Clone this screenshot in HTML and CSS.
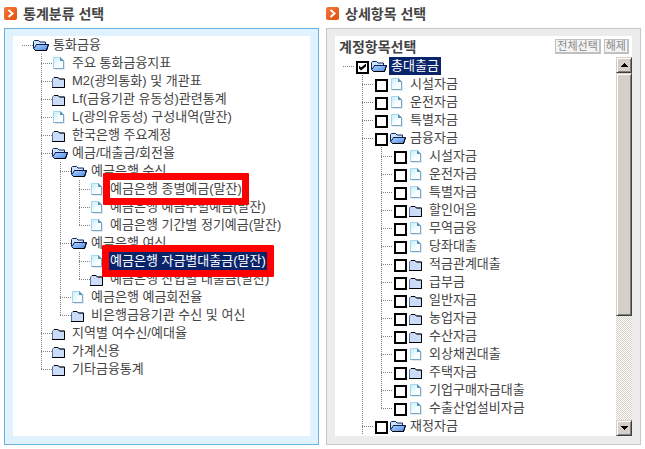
FILE: index.html
```html
<!DOCTYPE html>
<html lang="ko">
<head>
  <meta charset="UTF-8">
  <title>통계분류 선택</title>
  <meta name="viewport" content="width=device-width, initial-scale=1.0">
  <link rel="stylesheet" href="styles.css">
</head>
<body>

  <svg class="sprite" width="0" height="0" aria-hidden="true">
    <defs>
      <linearGradient id="orange" x1="0" y1="0" x2="1" y2="1">
        <stop offset="0" stop-color="#f47a3c"/>
        <stop offset="1" stop-color="#e2500c"/>
      </linearGradient>
      <linearGradient id="paper" x1="0" y1="0" x2="1" y2="1">
        <stop offset="0" stop-color="#c4ecfb"/>
        <stop offset="0.6" stop-color="#fafeff"/>
      </linearGradient>
      <linearGradient id="blue" x1="0" y1="0" x2="1" y2="1">
        <stop offset="0" stop-color="#b4d8ff"/>
        <stop offset="1" stop-color="#4c86e4"/>
      </linearGradient>
    </defs>
    <symbol id="arrow" viewBox="0 0 13 13">
      <rect width="13" height="13" rx="2" fill="url(#orange)"/>
      <path d="M4.500 3l4 3.500-4 3.500" fill="none" stroke="#fff" stroke-width="2"/>
    </symbol>
    <symbol id="open" viewBox="0 0 16 16">
      <path d="M.5 11.500V4.500l1-1h4l1.500 1.500h5.500v2" fill="#cfe2fb" stroke="#10245c"/>
      <path d="M3 7.500h12.500l-2 6H2.500l-2-2" fill="url(#blue)" stroke="#0a1c58"/>
      <path d="M1 11.500L3.500 7.500" stroke="#10245c" fill="none"/>
      <path d="M2.500 13.500h11l2-6" stroke="#000" fill="none"/>
    </symbol>
    <symbol id="closed" viewBox="0 0 16 16">
      <path d="M.5 14.500V6l1.500-1.500h4L7.500 6h5v8.500z" fill="#cbdcf8" stroke="#5c74a4"/>
      <path d="M2 4.500h4L7.500 6h5v8.500H0" fill="none" stroke="#000"/>
    </symbol>
    <symbol id="doc" viewBox="0 0 16 16">
      <path d="M1.500 2.500h7l3 3v8h-10z" fill="url(#paper)" stroke="#a4d8ec"/>
      <path d="M11.500 5.500v8h-10" fill="none" stroke="#7ba6c4"/>
      <path d="M8 2v4h4z" fill="#5c92b8"/>
      <path d="M12.500 6v8.500H3" fill="none" stroke="#dfe7f0"/>
    </symbol>
  </svg>

  <main class="page">
    <section class="column">
      <h2 class="title"><svg class="arrow"><use href="#arrow"/></svg>통계분류 선택</h2>
      <div class="panel panel-blue">
        <div class="inner">
          <ul class="tree tree-left">
            <li>
              <div class="row"><svg class="icon"><use href="#open"/></svg><span class="label">통화금융</span></div>
              <ul>
                <li><div class="row"><svg class="icon"><use href="#doc"/></svg><span class="label">주요 통화금융지표</span></div></li>
                <li><div class="row"><svg class="icon"><use href="#closed"/></svg><span class="label">M2(광의통화) 및 개관표</span></div></li>
                <li><div class="row"><svg class="icon"><use href="#closed"/></svg><span class="label">Lf(금융기관 유동성)관련통계</span></div></li>
                <li><div class="row"><svg class="icon"><use href="#doc"/></svg><span class="label">L(광의유동성) 구성내역(말잔)</span></div></li>
                <li><div class="row"><svg class="icon"><use href="#closed"/></svg><span class="label">한국은행 주요계정</span></div></li>
                <li>
                  <div class="row"><svg class="icon"><use href="#open"/></svg><span class="label">예금/대출금/회전율</span></div>
                  <ul>
                    <li>
                      <div class="row"><svg class="icon"><use href="#open"/></svg><span class="label">예금은행 수신</span></div>
                      <ul>
                        <li><div class="row"><svg class="icon"><use href="#doc"/></svg><span class="label marked">예금은행 종별예금(말잔)</span></div></li>
                        <li><div class="row"><svg class="icon"><use href="#doc"/></svg><span class="label">예금은행 예금주별예금(말잔)</span></div></li>
                        <li><div class="row"><svg class="icon"><use href="#doc"/></svg><span class="label">예금은행 기간별 정기예금(말잔)</span></div></li>
                      </ul>
                    </li>
                    <li>
                      <div class="row"><svg class="icon"><use href="#open"/></svg><span class="label">예금은행 여신</span></div>
                      <ul>
                        <li><div class="row"><svg class="icon"><use href="#doc"/></svg><span class="label selected marked">예금은행 자금별대출금(말잔)</span></div></li>
                        <li><div class="row"><svg class="icon"><use href="#closed"/></svg><span class="label">예금은행 산업별 대출금(말잔)</span></div></li>
                      </ul>
                    </li>
                    <li><div class="row"><svg class="icon"><use href="#doc"/></svg><span class="label">예금은행 예금회전율</span></div></li>
                    <li><div class="row"><svg class="icon"><use href="#closed"/></svg><span class="label">비은행금융기관 수신 및 여신</span></div></li>
                  </ul>
                </li>
                <li><div class="row"><svg class="icon"><use href="#closed"/></svg><span class="label">지역별 여수신/예대율</span></div></li>
                <li><div class="row"><svg class="icon"><use href="#closed"/></svg><span class="label">가계신용</span></div></li>
                <li><div class="row"><svg class="icon"><use href="#closed"/></svg><span class="label">기타금융통계</span></div></li>
              </ul>
            </li>
          </ul>
        </div>
      </div>
    </section>

    <section class="column">
      <h2 class="title"><svg class="arrow"><use href="#arrow"/></svg>상세항목 선택</h2>
      <div class="panel panel-gray">
        <div class="inner">
          <div class="toolbar">
            <h3 class="subtitle">계정항목선택</h3>
            <button type="button" class="btn" id="all">전체선택</button>
            <button type="button" class="btn" id="none">해제</button>
          </div>
          <div class="scroller">
            <ul class="tree tree-right">
              <li>
                <label class="row"><input type="checkbox" checked><svg class="icon"><use href="#open"/></svg><span class="label selected">총대출금</span></label>
                <ul>
                  <li><label class="row"><input type="checkbox"><svg class="icon"><use href="#doc"/></svg><span class="label">시설자금</span></label></li>
                  <li><label class="row"><input type="checkbox"><svg class="icon"><use href="#doc"/></svg><span class="label">운전자금</span></label></li>
                  <li><label class="row"><input type="checkbox"><svg class="icon"><use href="#doc"/></svg><span class="label">특별자금</span></label></li>
                  <li>
                    <label class="row"><input type="checkbox"><svg class="icon"><use href="#open"/></svg><span class="label">금융자금</span></label>
                    <ul>
                      <li><label class="row"><input type="checkbox"><svg class="icon"><use href="#doc"/></svg><span class="label">시설자금</span></label></li>
                      <li><label class="row"><input type="checkbox"><svg class="icon"><use href="#doc"/></svg><span class="label">운전자금</span></label></li>
                      <li><label class="row"><input type="checkbox"><svg class="icon"><use href="#doc"/></svg><span class="label">특별자금</span></label></li>
                      <li><label class="row"><input type="checkbox"><svg class="icon"><use href="#closed"/></svg><span class="label">할인어음</span></label></li>
                      <li><label class="row"><input type="checkbox"><svg class="icon"><use href="#doc"/></svg><span class="label">무역금융</span></label></li>
                      <li><label class="row"><input type="checkbox"><svg class="icon"><use href="#doc"/></svg><span class="label">당좌대출</span></label></li>
                      <li><label class="row"><input type="checkbox"><svg class="icon"><use href="#closed"/></svg><span class="label">적금관계대출</span></label></li>
                      <li><label class="row"><input type="checkbox"><svg class="icon"><use href="#closed"/></svg><span class="label">급부금</span></label></li>
                      <li><label class="row"><input type="checkbox"><svg class="icon"><use href="#closed"/></svg><span class="label">일반자금</span></label></li>
                      <li><label class="row"><input type="checkbox"><svg class="icon"><use href="#closed"/></svg><span class="label">농업자금</span></label></li>
                      <li><label class="row"><input type="checkbox"><svg class="icon"><use href="#closed"/></svg><span class="label">수산자금</span></label></li>
                      <li><label class="row"><input type="checkbox"><svg class="icon"><use href="#doc"/></svg><span class="label">외상채권대출</span></label></li>
                      <li><label class="row"><input type="checkbox"><svg class="icon"><use href="#closed"/></svg><span class="label">주택자금</span></label></li>
                      <li><label class="row"><input type="checkbox"><svg class="icon"><use href="#doc"/></svg><span class="label">기업구매자금대출</span></label></li>
                      <li><label class="row"><input type="checkbox"><svg class="icon"><use href="#doc"/></svg><span class="label">수출산업설비자금</span></label></li>
                    </ul>
                  </li>
                  <li class="more"><label class="row"><input type="checkbox"><svg class="icon"><use href="#open"/></svg><span class="label">재정자금</span></label></li>
                </ul>
              </li>
            </ul>
            <div class="scrollbar">
              <button type="button" class="sb-btn" aria-label="위로"><svg width="7" height="4" shape-rendering="crispEdges"><path d="M3 0h1v1h1v1h1v1h1v1H0V3h1V2h1V1h1z"/></svg></button>
              <div class="sb-track"><div class="sb-thumb"></div></div>
              <button type="button" class="sb-btn" aria-label="아래로"><svg width="7" height="4" shape-rendering="crispEdges"><path d="M0 0h7v1H6v1H5v1H4v1H3V3H2V2H1V1H0z"/></svg></button>
            </div>
          </div>
        </div>
      </div>
    </section>
  </main>

  <script>
    const boxes = document.querySelectorAll('.tree-right input');

    document.getElementById('all').addEventListener('click', () => {
      boxes.forEach(b => b.checked = true);
    });

    document.getElementById('none').addEventListener('click', () => {
      boxes.forEach(b => b.checked = false);
    });
  </script>

</body>
</html>
```
FILE: styles.css
```css
* {
  box-sizing: border-box;
}
body {
  margin: 0;
  background-color: #fff;
  color: #444;
  font-family: "Liberation Sans", "Noto Sans CJK KR", sans-serif;
  font-size: 13px;
  line-height: 18px;
}
ul {
  list-style: none;
  margin: 0;
  padding: 0;
}
.sprite {
  position: absolute;
}
.page {
  display: grid;
  grid-template-columns: 1fr 1fr;
  gap: 7px;
  min-height: 100vh;
  padding: 0 4px 4px;
}
.column {
  display: flex;
  flex-direction: column;
  min-width: 0;
}
.title {
  display: flex;
  align-items: center;
  gap: 6px;
  height: 28px;
  margin: 0;
  padding-bottom: 1px;
  font-size: 14px;
}
.arrow {
  width: 13px;
  height: 13px;
}
.panel {
  flex: 1;
  display: flex;
  padding: 7px 8px 8px;
  border: 1px solid;
}
.panel-blue {
  border-color: #6cb0e0;
  background-color: #e0f1ff;
}
.panel-gray {
  border-color: #c8c8c8;
  background-color: #ececec;
}
.inner {
  flex: 1;
  display: flex;
  flex-direction: column;
  min-width: 0;
  background-color: #fff;
}

/* tree */
.tree {
  flex: 1;
  white-space: nowrap;
}
.tree-left {
  padding-left: 9px;
}
.tree-right {
  padding-left: 8px;
}
.tree ul {
  margin-left: 19px;
}
.tree li {
  position: relative;
}
.tree ul > li::before {
  content: "";
  position: absolute;
  top: 0;
  bottom: 0;
  left: 0;
  width: 1px;
  background: repeating-linear-gradient(#808080 0 1px, transparent 1px 2px);
}
.tree ul > li:last-child::before {
  bottom: auto;
  height: 10px;
}
.tree ul > li.more::before {
  bottom: 0;
  height: auto;
}
.row {
  display: flex;
  align-items: center;
  height: 18px;
}
.row::before {
  content: "";
  flex: none;
  width: 11px;
  height: 1px;
  background: repeating-linear-gradient(90deg, #808080 0 1px, transparent 1px 2px);
}
.icon {
  flex: none;
  width: 16px;
  height: 16px;
  margin-right: 3px;
}
.label {
  position: relative;
  padding: 0 1px;
}
.selected {
  margin-left: -1px;
  padding: 0 2px;
  background-color: #0a246a;
  color: #fff;
}
.marked::after {
  content: "";
  position: absolute;
  z-index: 1;
  inset: -7px -6px;
  border: 7px solid #f00;
  border-radius: 1px;
}
.row input {
  appearance: none;
  flex: none;
  width: 13px;
  height: 13px;
  margin: 2px 2px 0;
  border: 2px solid #000;
  background-color: #fff;
}
.row input:checked::before {
  content: "";
  display: block;
  width: 7px;
  height: 7px;
  margin: 1px;
  background-color: #000;
  clip-path: polygon(0 2px, 2px 4px, 7px 0, 7px 3px, 2px 7px, 0 5px);
}

/* right panel */
.toolbar {
  display: flex;
  align-items: center;
  gap: 3px;
  height: 21px;
  padding: 0 3px 0 4px;
}
.subtitle {
  flex: 1;
  margin: 0;
  font-size: 14px;
}
.btn {
  height: 15px;
  padding: 0 1px;
  border: 1px solid #c0c0c0;
  border-width: 1px 2px 2px 1px;
  background-color: #f4f4f4;
  color: #888;
  font: 11px/12px "Liberation Sans", "Noto Sans CJK KR", sans-serif;
}
.scroller {
  flex: 1;
  display: flex;
}
.scrollbar {
  display: flex;
  flex-direction: column;
  width: 16px;
}
.sb-btn,
.sb-thumb {
  border: 1px solid;
  border-color: #d4d0c8 #404040 #404040 #d4d0c8;
  background-color: #d4d0c8;
  box-shadow: inset 1px 1px #fff, inset -1px -1px #808080;
}
.sb-btn {
  display: flex;
  align-items: center;
  justify-content: center;
  height: 16px;
  padding: 0;
}
.sb-track {
  flex: 1;
  background: repeating-conic-gradient(#d4d0c8 0 25%, #fff 0 50%) 0 0 / 2px 2px;
}
.sb-thumb {
  height: 70%;
}
```
